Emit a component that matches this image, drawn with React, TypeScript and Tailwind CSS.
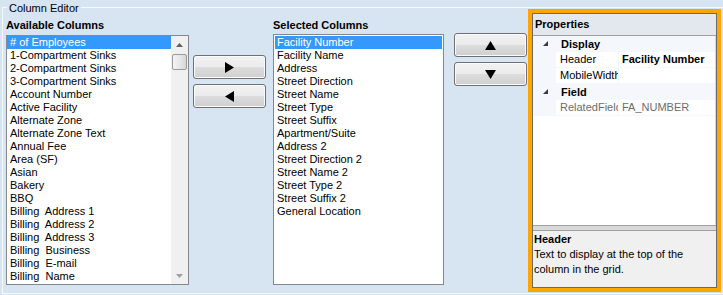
import type { ReactNode } from 'react'

const available = [
  '# of Employees',
  '1-Compartment Sinks',
  '2-Compartment Sinks',
  '3-Compartment Sinks',
  'Account Number',
  'Active Facility',
  'Alternate Zone',
  'Alternate Zone Text',
  'Annual Fee',
  'Area (SF)',
  'Asian',
  'Bakery',
  'BBQ',
  'Billing  Address 1',
  'Billing  Address 2',
  'Billing  Address 3',
  'Billing  Business',
  'Billing  E-mail',
  'Billing  Name',
]

const selected = [
  'Facility Number',
  'Facility Name',
  'Address',
  'Street Direction',
  'Street Name',
  'Street Type',
  'Street Suffix',
  'Apartment/Suite',
  'Address 2',
  'Street Direction 2',
  'Street Name 2',
  'Street Type 2',
  'Street Suffix 2',
  'General Location',
]

function ArrowButton({ children }: { children: ReactNode }) {
  return (
    <button
      type="button"
      className="flex h-[24px] w-full items-center justify-center rounded-[3px] border border-[#707070] bg-[linear-gradient(to_bottom,#f2f2f2_0%,#ebebeb_50%,#dddddd_50%,#cfcfcf_100%)] shadow-[inset_0_0_0_1px_#fbfbfb]"
    >
      {children}
    </button>
  )
}

function CategoryRow({ label }: { label: string }) {
  return (
    <div className="flex h-[16px] items-center bg-[#f4f7fc]">
      <div className="flex w-[23px] items-center pl-[10px]">
        <svg width="6" height="6" viewBox="0 0 6 6">
          <polygon points="5,0 5,5 0,5" fill="#3c3c3c" />
        </svg>
      </div>
      <span className="pl-[5px] font-bold">{label}</span>
    </div>
  )
}

function PropRow({ name, value, bold, readOnly }: { name: string; value: string; bold?: boolean; readOnly?: boolean }) {
  return (
    <div className="flex h-[16px]">
      <div className="w-[23px] bg-[#f4f7fc]" />
      <div
        className={`w-[63px] overflow-hidden whitespace-nowrap border-b border-r border-[#f4f7fc] pl-[4px] leading-[15px] ${
          readOnly ? 'text-[#6d6d6d]' : ''
        }`}
      >
        {name}
      </div>
      <div
        className={`flex-1 overflow-hidden whitespace-nowrap border-b border-[#f4f7fc] pl-[3px] leading-[15px] ${
          bold ? 'font-bold' : ''
        } ${readOnly ? 'text-[#6d6d6d]' : ''}`}
      >
        {value}
      </div>
    </div>
  )
}

export default function App() {
  return (
    <div className="h-[295px] w-[723px] overflow-hidden bg-[#d7e4f2] pl-[2px] pt-[7px] font-['Liberation_Sans',Arial,sans-serif] text-[11px] leading-[13px] text-black">
      <div className="relative flex h-[287px] items-start border-b border-l border-t border-[#f6f9fc] pl-[3px]">
        <span className="absolute left-[4px] top-[-6px] bg-[#d7e4f2] px-[2px]">Column Editor</span>

        {/* available columns */}
        <div className="mt-[11px] w-[183px]">
          <div className="font-bold">Available Columns</div>
          <div className="mt-[3px] flex h-[250px] border border-[#828790] bg-white">
            <ul className="min-w-0 flex-1">
              {available.map((item, i) => (
                <li
                  key={item}
                  className={`h-[13px] whitespace-pre pl-[3px] ${i === 0 ? 'bg-[#3399ff] text-white' : ''}`}
                >
                  {item}
                </li>
              ))}
            </ul>
            <div className="flex w-[17px] flex-col bg-[#f0f0f0]">
              <div className="flex h-[17px] items-center justify-center">
                <svg width="7" height="4" viewBox="0 0 7 4">
                  <polygon points="3.5,0 7,4 0,4" fill="#606060" />
                </svg>
              </div>
              <div className="mx-[1px] mt-[1px] h-[16px] rounded-[2px] border border-[#9b9b9b] bg-[linear-gradient(to_right,#f3f3f3,#e4e4e4_60%,#d6d6d6)]" />
              <div className="flex-1" />
              <div className="flex h-[17px] items-center justify-center">
                <svg width="7" height="4" viewBox="0 0 7 4">
                  <polygon points="0,0 7,0 3.5,4" fill="#a0a0a0" />
                </svg>
              </div>
            </div>
          </div>
        </div>

        {/* add / remove */}
        <div className="ml-[4px] mt-[47px] flex w-[73px] flex-col gap-[5px]">
          <ArrowButton>
            <svg width="9" height="11" viewBox="0 0 9 11">
              <polygon points="0,0 9,5.5 0,11" fill="#000" />
            </svg>
          </ArrowButton>
          <ArrowButton>
            <svg width="9" height="11" viewBox="0 0 9 11">
              <polygon points="9,0 0,5.5 9,11" fill="#000" />
            </svg>
          </ArrowButton>
        </div>

        {/* selected columns */}
        <div className="ml-[7px] mt-[11px] w-[171px]">
          <div className="font-bold">Selected Columns</div>
          <ul className="mt-[2px] h-[251px] border border-[#828790] bg-white p-[1px]">
            {selected.map((item, i) => (
              <li key={item} className={`h-[13px] whitespace-pre pl-[2px] ${i === 0 ? 'bg-[#3399ff] text-white' : ''}`}>
                {item}
              </li>
            ))}
          </ul>
        </div>

        {/* move up / down */}
        <div className="ml-[10px] mt-[25px] flex w-[73px] flex-col gap-[5px]">
          <ArrowButton>
            <svg width="11" height="9" viewBox="0 0 11 9">
              <polygon points="5.5,0 11,9 0,9" fill="#000" />
            </svg>
          </ArrowButton>
          <ArrowButton>
            <svg width="11" height="9" viewBox="0 0 11 9">
              <polygon points="0,0 11,0 5.5,9" fill="#000" />
            </svg>
          </ArrowButton>
        </div>

        {/* properties */}
        <div className="ml-[1px] mt-[1px] flex h-[283px] w-[193px] border-4 border-[#ffa500]">
          <div className="flex min-w-0 flex-1 flex-col border border-[#6a6a6a] bg-white">
            <div className="flex h-[22px] items-center border-b border-[#a0a0a0] bg-[#e3e8ef] pl-[2px] font-bold">
              Properties
            </div>
            <div className="flex-1 border-r border-[#d8d8d8]">
              <CategoryRow label="Display" />
              <PropRow name="Header" value="Facility Number" bold />
              <PropRow name="MobileWidth" value="" />
              <CategoryRow label="Field" />
              <PropRow name="RelatedField" value="FA_NUMBER" readOnly />
            </div>
            <div className="h-[5px] border-t border-[#a0a0a0] bg-[#d9d9d9]" />
            <div className="h-[57px] border-t border-[#a0a0a0] bg-[#f0f0f0] pl-[1px] pt-[1px] leading-[15px]">
              <div className="font-bold">Header</div>
              <div>Text to display at the top of the column in the grid.</div>
            </div>
          </div>
        </div>
      </div>
    </div>
  )
}
